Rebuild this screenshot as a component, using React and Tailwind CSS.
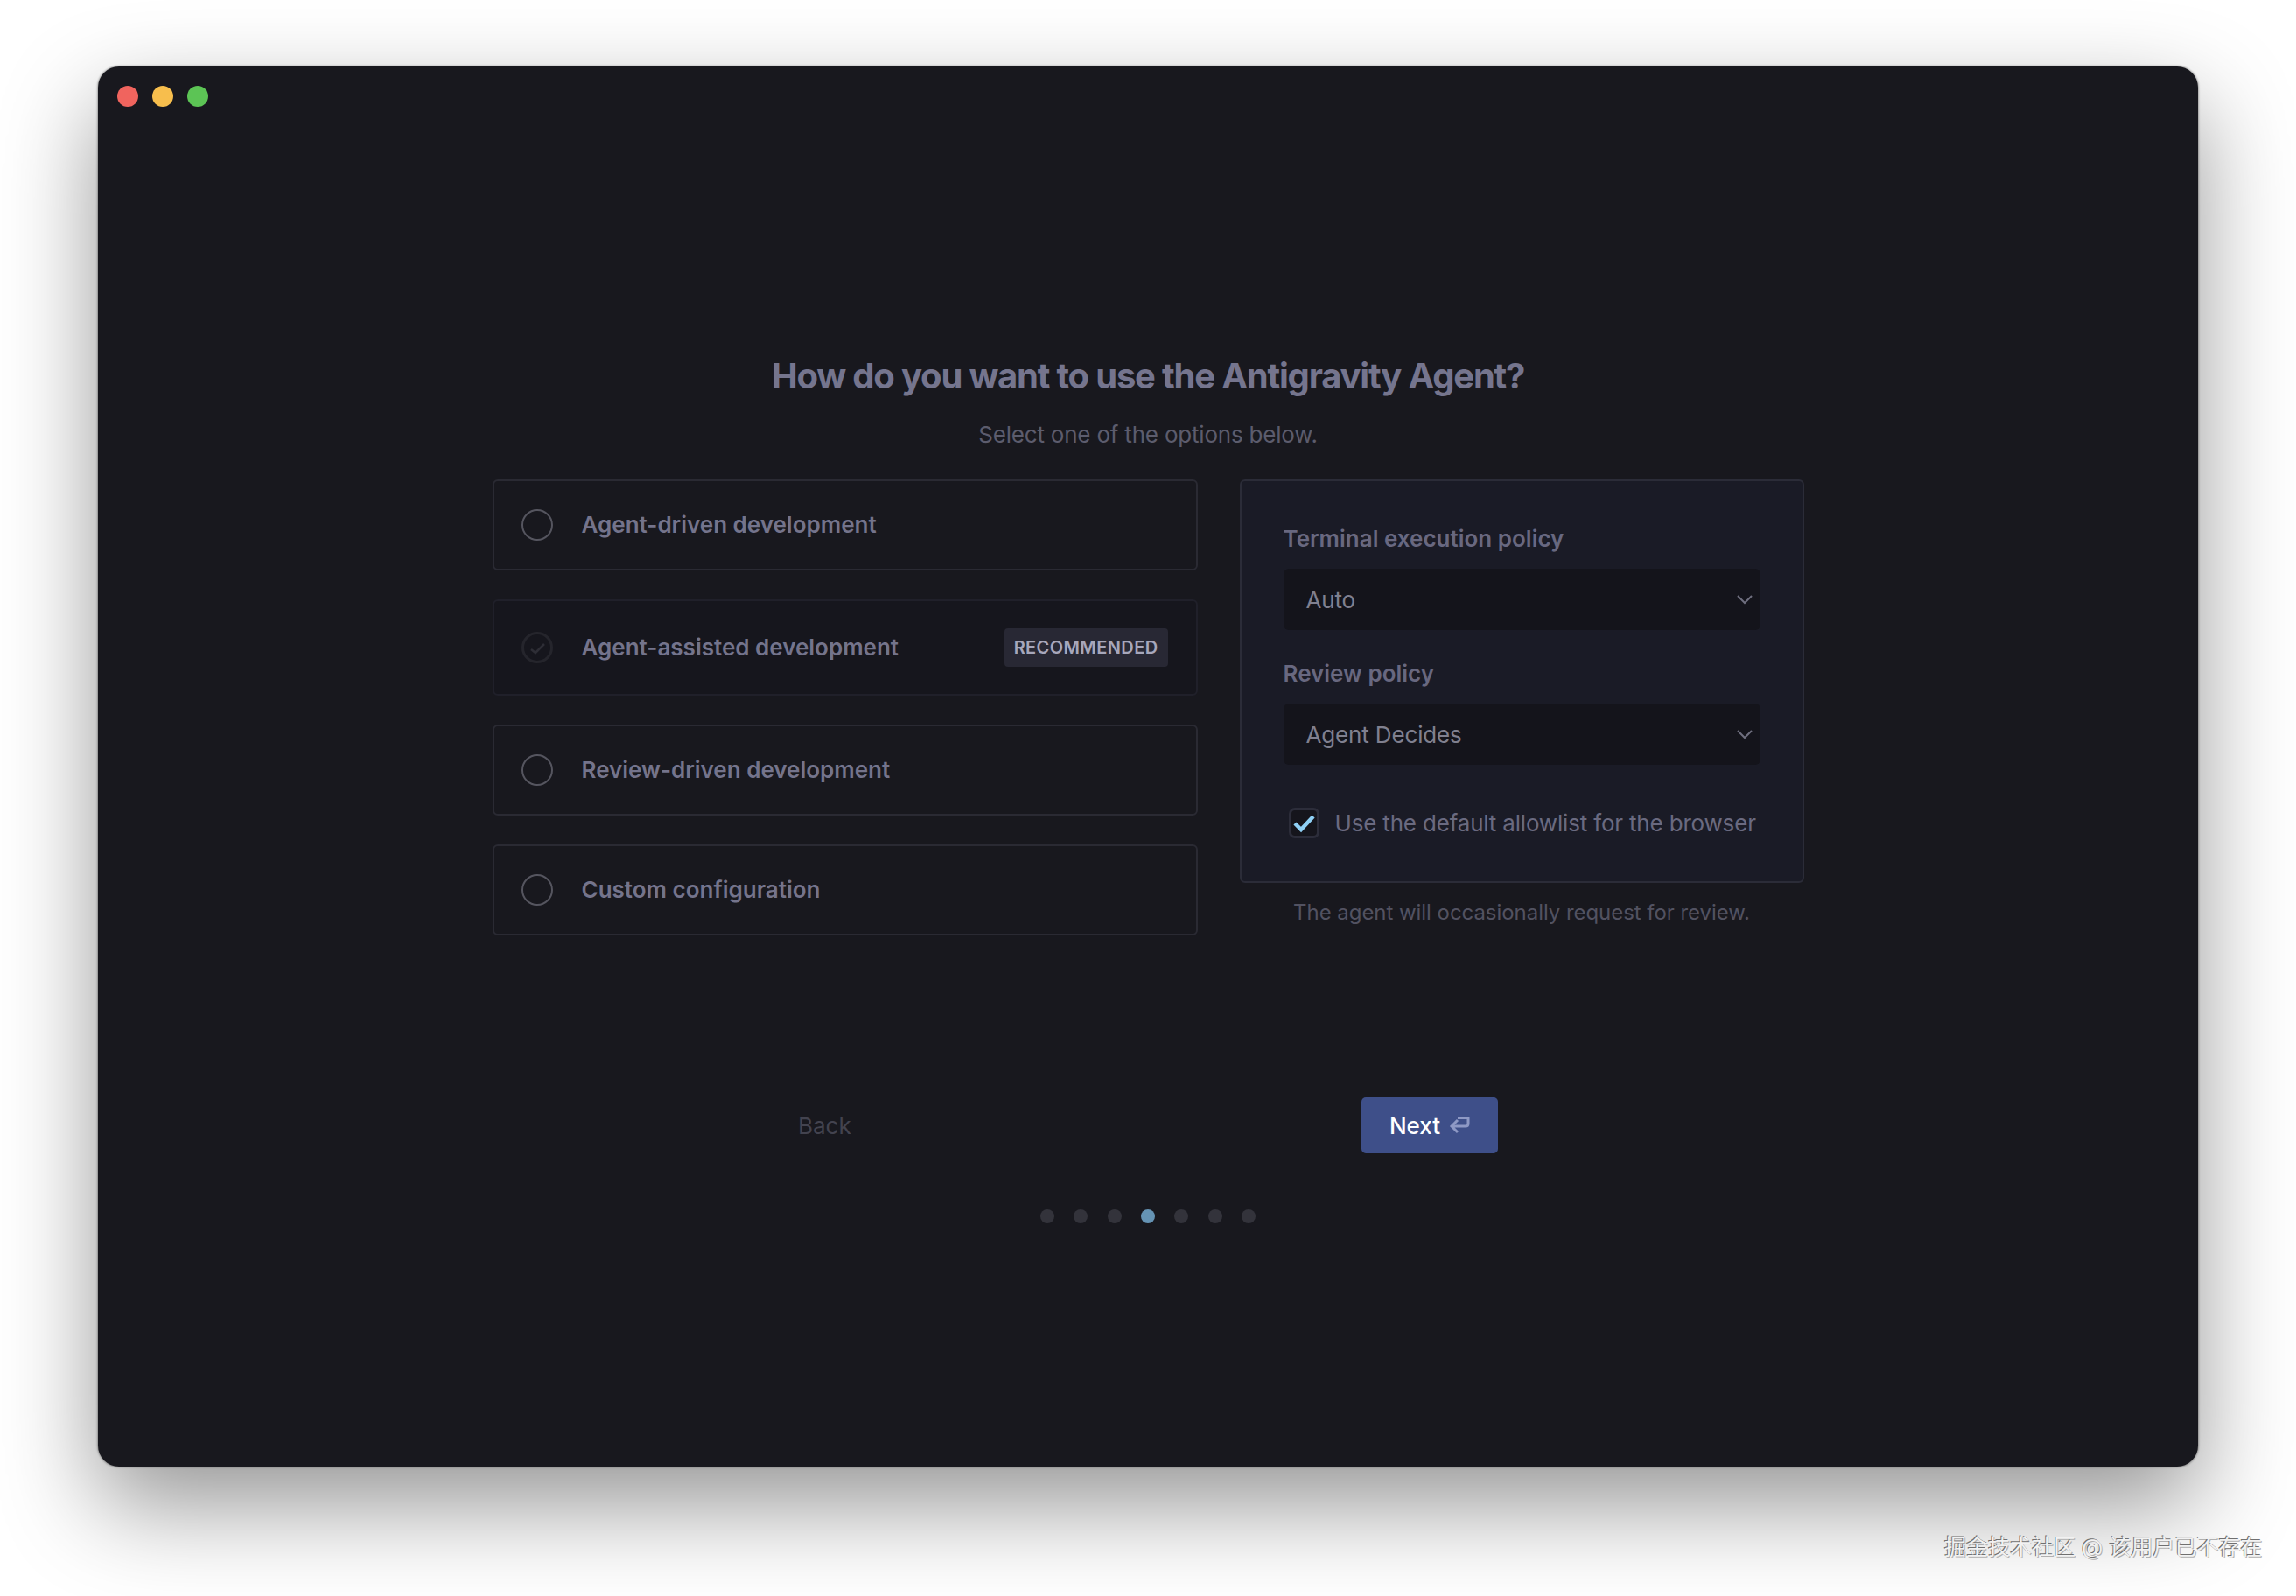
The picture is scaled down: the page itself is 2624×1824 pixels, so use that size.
function Radio() {
  return <span className="block w-[36px] h-[36px] rounded-full border-2 border-[#55555f] shrink-0" />;
}

function RadioChecked() {
  return (
    <svg width="36" height="36" viewBox="0 0 36 36" className="shrink-0" fill="none">
      <circle cx="18" cy="18" r="16.5" stroke="#25252c" strokeWidth="3" />
      <path d="M11 20l5 4 10-10" stroke="#2e2e36" strokeWidth="2.5" />
    </svg>
  );
}

function Option({ label, badge, checked }) {
  return (
    <div
      className={
        checked
          ? "h-[110px] flex items-center pl-[31px] pr-[32px] rounded-[6px] border-2 border-[#20202a] bg-[#16161d]"
          : "h-[104px] flex items-center pl-[31px] pr-[32px] rounded-[6px] border-2 border-[#2a2a33]"
      }
    >
      {checked ? <RadioChecked /> : <Radio />}
      <span className="ml-[33px] text-[26px] font-semibold text-[#74748c] leading-none">{label}</span>
      {badge && (
        <span className="ml-auto h-[44px] px-[11px] flex items-center rounded-[4px] bg-[#282834] text-[20px] font-semibold tracking-[0.4px] text-[#a7a7bb]">
          {badge}
        </span>
      )}
    </div>
  );
}

function Select({ value }) {
  return (
    <div className="h-[70px] flex items-center justify-between pl-[26px] pr-[8px] rounded-[6px] bg-[#14141b]">
      <span className="text-[26px] tracking-[-0.15px] text-[#80808f]">{value}</span>
      <svg width="20" height="12" viewBox="0 0 20 12" fill="none">
        <path d="M2 2l8 8 8-8" stroke="#6f6f7f" strokeWidth="2" />
      </svg>
    </div>
  );
}

export default function App() {
  return (
    <div className="relative w-[2624px] h-[1824px] bg-white pt-[76px] pl-[112px] overflow-hidden font-['Inter','Noto_Sans_CJK_SC',sans-serif]">
      <div className="w-[2400px] h-[1600px] rounded-[24px] bg-[#18181e] shadow-[0_44px_110px_0_rgba(0,0,0,0.42),0_0_2px_1px_rgba(0,0,0,0.3)] flex flex-col items-center">
        <div className="self-start flex gap-[16px] pt-[22px] pl-[22px]">
          <span className="w-[24px] h-[24px] rounded-full bg-[#f0645e]" />
          <span className="w-[24px] h-[24px] rounded-full bg-[#f7be4d]" />
          <span className="w-[24px] h-[24px] rounded-full bg-[#5cc455]" />
        </div>

        <h1 className="mt-[284px] text-[40px] leading-[48px] font-bold tracking-[-1.2px] text-[#75758e]">
          How do you want to use the Antigravity Agent?
        </h1>
        <p className="mt-[27px] text-[26px] leading-[32px] tracking-[-0.2px] text-[#5c5c6d]">Select one of the options below.</p>

        <div className="mt-[35px] flex gap-[48px] items-start">
          <div className="w-[806px] flex flex-col gap-[33px]">
            <Option label="Agent-driven development" />
            <Option label="Agent-assisted development" badge="RECOMMENDED" checked />
            <Option label="Review-driven development" />
            <Option label="Custom configuration" />
          </div>
          <div className="w-[645px] flex flex-col items-center">
            <div className="w-full h-[461px] rounded-[6px] border-2 border-[#2b2c38] bg-[#1a1b26] px-[48px] pt-[48px]">
              <div className="text-[26px] leading-[36px] font-semibold text-[#686880] mb-[16px]">Terminal execution policy</div>
              <Select value="Auto" />
              <div className="mt-[32px] text-[26px] leading-[36px] font-semibold text-[#686880] mb-[16px]">Review policy</div>
              <Select value="Agent Decides" />
              <div className="mt-[47px] ml-[6px] flex items-center gap-[18px]">
                <span className="w-[35px] h-[35px] rounded-[7px] border-[3px] border-[#2c2d3a] bg-[#15151c] flex items-center justify-center shrink-0">
                  <svg width="29" height="29" viewBox="0 0 29 29" fill="none">
                    <path d="M4 15l7 7 14-15" stroke="#8fd0f5" strokeWidth="4.5" />
                  </svg>
                </span>
                <span className="text-[26px] tracking-[-0.18px] whitespace-nowrap text-[#6a6a80]">Use the default allowlist for the browser</span>
              </div>
            </div>
            <p className="mt-[18px] text-[24px] leading-[32px] tracking-[-0.05px] text-[#525261]">The agent will occasionally request for review.</p>
          </div>
        </div>

        <div className="mt-[185px] w-[800px] flex items-center justify-between">
          <span className="text-[26px] text-[#43434f]">Back</span>
          <button className="w-[156px] h-[64px] rounded-[5px] bg-[#3e4f89] flex items-center justify-center gap-[10px] text-[26px] font-medium text-white">
            Next
            <svg width="24" height="22" viewBox="0 0 24 22" fill="none">
              <path d="M10 2.5H22V9Q22 12 19 12H3M10 5L3 12L10 19" stroke="#8e99c5" strokeWidth="3" />
            </svg>
          </button>
        </div>

        <div className="mt-[64px] flex gap-[22.4px]">
          {[0, 1, 2, 3, 4, 5, 6].map((i) => (
            <span key={i} className={i === 3 ? "w-[16px] h-[16px] rounded-full bg-[#6593b4]" : "w-[16px] h-[16px] rounded-full bg-[#33333b]"} />
          ))}
        </div>
      </div>
      <div className="absolute left-[2222px] top-[1752px] text-[25px] leading-[32px] whitespace-nowrap text-[#f2f2f2] [text-shadow:-1px_-1px_0_#707070,1px_1px_0_#b0b0b0]">
        掘金技术社区 @ 该用户已不存在
      </div>
    </div>
  );
}
